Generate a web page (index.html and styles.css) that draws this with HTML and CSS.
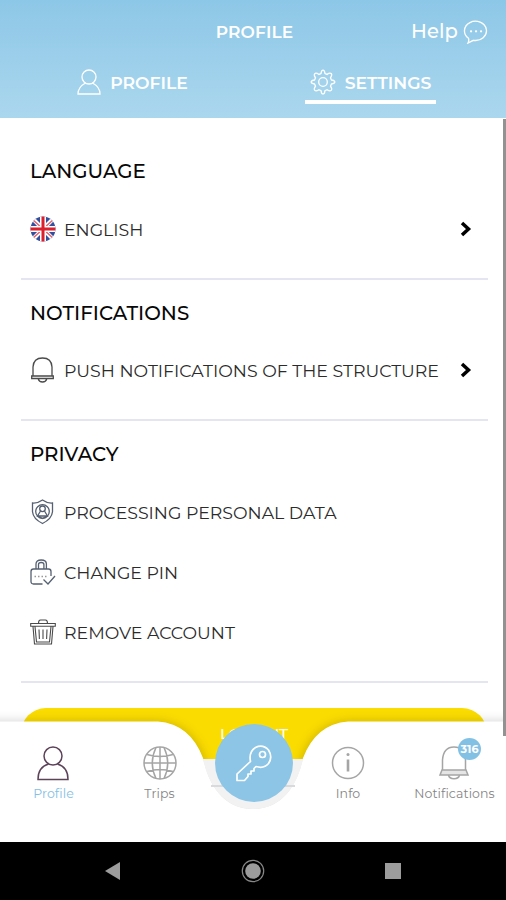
FILE: index.html
```html
<!DOCTYPE html>
<html lang="en">
<head>
<meta charset="utf-8">
<title>Profile settings</title>
<link rel="stylesheet" href="styles.css">
</head>
<body>
<div class="app">
  <header class="header">
    <div class="titlebar">
      <h1 class="title">PROFILE</h1>
      <a class="help"><span class="help-text">Help</span>
        <svg width="26" height="24" viewBox="0 0 26 24"><path d="M5.500 18.300A11 9.600 0 1 1 10.400 20.300L5 23Q6.300 20.500 5.500 18.300Z"/><path class="dots" d="M8 11.300h.1M13 11.300h.1M18 11.300h.1"/></svg>
      </a>
    </div>
    <nav class="tabs">
      <a class="tab"><svg width="24" height="26" viewBox="0 0 24 26"><circle cx="12" cy="8" r="7"/><path d="M8.500 14Q1 18 1 25H23Q23 18 15.500 14"/></svg><span>PROFILE</span></a>
      <a class="tab active"><svg width="26" height="26" viewBox="0 0 26 26"><circle cx="13" cy="13" r="4.300"/><path d="M13 1.200q1.600 0 2 3.300l2.100.9q2.800-2 4.100-.8t-.7 4.200l.9 2.200q3.400.4 3.400 2t-3.400 2l-.9 2.200q2 2.900.7 4.200t-4.100-.7l-2.100.9q-.4 3.300-2 3.300t-2-3.300l-2.100-.9q-2.800 2-4.100.7t.7-4.200l-.9-2.200q-3.400-.4-3.400-2t3.400-2l.9-2.200q-2-2.900-.7-4.200t4.100.8l2.100-.9q.4-3.300 2-3.300z"/></svg><span>SETTINGS</span></a>
    </nav>
  </header>

  <main class="content">
    <section class="section">
      <h2>LANGUAGE</h2>
      <a class="row">
        <svg class="flag" width="26" height="26" viewBox="0 0 26 26"><defs><clipPath id="round"><circle cx="13" cy="13" r="12.500"/></clipPath></defs><g clip-path="url(#round)"><path fill="#314f9d" d="M0 0h26v26H0z"/><path stroke="#fff" stroke-width="4" d="M2 2l22 22M24 2L2 24"/><path stroke="#e5626b" stroke-width="1.500" d="M2 3l22 20M24 3L2 23"/><path stroke="#fff" stroke-width="6" d="M13 0v26M0 13h26"/><path stroke="#dc1f2c" stroke-width="3" d="M13 0v26M0 13h26"/></g></svg>
        <span>ENGLISH</span>
        <svg class="chevron" width="12" height="16" viewBox="0 0 12 16"><path d="M2 2l6.500 6L2 14"/></svg>
      </a>
    </section>
    <section class="section">
      <h2>NOTIFICATIONS</h2>
      <a class="row">
        <svg class="dark" width="26" height="26" viewBox="0 0 26 26"><path d="M3 19V10Q3.500 1 12.500 1T22 10v9M1.700 19h21.600v2.500H1.700zM8.300 22c1 4 7.400 4 8.400 0"/></svg>
        <span>PUSH NOTIFICATIONS OF THE STRUCTURE</span>
        <svg class="chevron" width="12" height="16" viewBox="0 0 12 16"><path d="M2 2l6.500 6L2 14"/></svg>
      </a>
    </section>
    <section class="section">
      <h2>PRIVACY</h2>
      <a class="row">
        <svg class="slate" width="26" height="26" viewBox="0 0 26 26"><path d="M12.500 1Q7.500 4.500 2.500 4v8.800q.7 7.200 10 11.700 9.300-4.500 10-11.700V4q-5 .5-10-3z"/><circle cx="12.500" cy="12.500" r="6.800"/><circle cx="12.500" cy="9.800" r="2.800"/><path d="M10.500 12L7.500 17h10l-3-5M8.500 17.500l4 2 4-2"/></svg>
        <span>PROCESSING PERSONAL DATA</span>
      </a>
      <a class="row">
        <svg class="slate" width="26" height="26" viewBox="0 0 26 26"><path d="M6 10V5q0-4 5.200-4t5.200 4v5M8.500 10V5.500q0-2 2.700-2t2.700 2V10M12.500 25H3.500Q1 25 1 22.500v-10Q1 10 3.500 10h15Q21 10 21 12.500V17M13.500 20.500L18 25l7-8"/><path class="pin" d="M4.500 17.500h13"/></svg>
        <span>CHANGE PIN</span>
      </a>
      <a class="row">
        <svg class="dark trash" width="26" height="26" viewBox="0 0 26 26"><path d="M.7 4.500h24.600v2.800H.7zM8.500 4.500Q8.500 1 10.500 1h5q2 0 2 3.500M3 7.500L4.500 25h17L23 7.500M5 7.500L6.500 23h13L21 7.500M9 10.500l.4 9.500M13 10.500v9.500M17 10.500l-.4 9.500"/></svg>
        <span>REMOVE ACCOUNT</span>
      </a>
    </section>
    <button class="logout">LOGOUT</button>
    <hr class="end">
  </main>

  <nav class="dock">
    <svg class="dock-shape" width="506" height="142" viewBox="0 0 506 142">
      <defs><filter id="shade" x="-10%" y="-30%" width="120%" height="160%"><feGaussianBlur stdDeviation="6"/></filter><clipPath id="visible"><path d="M0 0h506v142H0z"/></clipPath></defs>
      <g clip-path="url(#visible)">
        <path fill="#000" opacity=".2" filter="url(#shade)" d="M-30 22H158Q190 24 203 57C211 91 228 108 253 108S295 91 303 57Q316 24 348 22H536V180H-30Z"/>
        <path fill="#fff" d="M0 21.500H158Q190 24 203 58C210 91 228 109 253 109S296 91 303 58Q316 24 348 21.500H506V142H0Z"/>
        <path fill="#f2f2f2" d="M203 59C210 91 228 109 253 109S296 91 303 59Z"/>
        <path stroke="#d9dadd" stroke-width="2" d="M211 86h84"/>
      </g>
    </svg>
    <div class="dock-items">
      <a class="item profile"><svg width="34" height="36" viewBox="0 0 34 36"><circle cx="16" cy="11" r="9"/><path d="M11.500 19Q1 22 1 34.500H31Q31 22 20.500 19"/></svg><span>Profile</span></a>
      <a class="item trips"><svg width="36" height="36" viewBox="0 0 36 36"><circle cx="18" cy="18" r="16"/><path d="M18 2v32M2 18h32M5 9.500q13 4 26 0M5 26.500q13-4 26 0M14 2.500Q6.500 18 14 33.500M22 2.500Q29.500 18 22 33.500"/></svg><span>Trips</span></a>
      <a class="key"><svg width="40" height="40" viewBox="0 0 40 40"><path d="M16.500 18.500Q14.500 9 21.500 4.500Q29 1 34.500 7Q39 14 34.500 20.500Q30 26 22 23.500L20 25.500v2.500h-3v3h-3v2.500L10.500 37.500H3V31Z"/><circle cx="28.500" cy="11.500" r="3"/></svg></a>
      <a class="item info"><svg width="36" height="36" viewBox="0 0 36 36"><circle cx="18" cy="18" r="15.500"/><path class="stem" d="M18 14.500v12"/><circle class="dot" cx="18" cy="9.500" r="1.500"/></svg><span>Info</span></a>
      <a class="item notes"><svg width="36" height="36" viewBox="0 0 36 36"><path d="M6.500 25V15Q7.500 2 18 2t11.500 13v10M12.500 30c1 5 10 5 11 0"/><path class="base" d="M6 25h24l2 5H4z"/></svg><span>Notifications</span><b class="badge">316</b></a>
    </div>
  </nav>
  <div class="scrollbar"></div>

  <footer class="system">
    <svg width="18" height="20" viewBox="0 0 18 20"><path d="M1 10L16 1v18z"/></svg>
    <svg width="26" height="26" viewBox="0 0 26 26"><circle cx="13" cy="13" r="7.800"/><circle class="ring" cx="13" cy="13" r="10.700"/></svg>
    <svg width="18" height="18" viewBox="0 0 18 18"><path d="M1 1h16v16H1z"/></svg>
  </footer>
</div>
</body>
</html>
```

FILE: styles.css
```css
* { box-sizing: border-box; }
body { margin: 0; font-family: Montserrat, Inter, "Open Sans", sans-serif; color: #2b2b2b; }
svg { flex: none; fill: none; }
.app { position: relative; width: 506px; height: 900px; display: flex; flex-direction: column; overflow: hidden; background: #fff; }

.header { height: 118px; flex: none; background: linear-gradient(#8dc7e7, #abd7ee); color: #fff; }
.titlebar { display: grid; grid-template-columns: 1fr auto 1fr; height: 64px; align-items: center; padding: 0 17px 0 20px; }
.title { grid-column: 2; margin: 0; font-size: 17px; font-weight: 600; letter-spacing: .1px; }
.help { justify-self: end; display: flex; align-items: center; gap: 5px; font-size: 19.500px; font-weight: 500; letter-spacing: .1px; }
.help-text { position: relative; top: -1px; }
.help svg, .tab svg { stroke: #fff; stroke-width: 1.300; }
.help .dots { stroke-width: 2.200; stroke-linecap: round; }
.tabs { display: flex; height: 40px; padding-left: 1px; }
.tab { width: 131px; margin-left: 66px; height: 40px; display: flex; align-items: center; justify-content: center; gap: 9px; font-size: 17.200px; font-weight: 600; border-bottom: 4px solid transparent; }
.tab + .tab { margin-left: 107px; }
.tab.active { border-color: #fff; }

.content { position: relative; flex: 1; padding: 20px 18px 0 21px; overflow: hidden; }
.section { padding: 18px 9px 18.500px; border-bottom: 2px solid #e4e5f0; }
.section h2 { margin: 0 0 13px; height: 30px; line-height: 30px; font-size: 19.800px; font-weight: 500; color: #080808; }
.row { display: flex; height: 60px; align-items: center; font-size: 17.350px; white-space: nowrap; }
.row svg { position: relative; top: -.5px; }
.row span { margin-left: 8px; }
.chevron { margin: 0 7px 0 auto; stroke: #000; stroke-width: 3.500; }
.dark { stroke: #4b4b4b; stroke-width: 1.300; }
.trash { stroke-width: 1.100; }
.slate { stroke: #556071; stroke-width: 1.300; }
.pin { stroke: #999; stroke-dasharray: 1.500 2; }
.logout { display: block; width: 466px; height: 51px; margin-top: 25px; padding: 0; border: 0; border-radius: 25px; background: #fbdc00; color: #fff; font: 500 15.500px/47px Montserrat, Inter, sans-serif; }
.end { margin: 25px 0 0; border: 0; border-top: 2px solid #dcdde2; }
.scrollbar { position: absolute; right: 0; top: 119px; width: 3px; height: 617px; background: #929292; }

.dock { position: absolute; left: 0; top: 700px; width: 506px; height: 142px; }
.dock-shape { position: absolute; inset: 0; }
.dock-items { position: relative; display: grid; grid-template-columns: 107px 105px 83px 106px 105px; height: 142px; }
.item { position: relative; display: flex; flex-direction: column; align-items: center; padding-top: 45px; font-size: 12.500px; line-height: 18px; color: #858585; white-space: nowrap; }
.item svg { stroke: #a5a5a5; stroke-width: 1.500; height: 36px; }
.item span { margin-top: 4px; letter-spacing: .1px; }
.profile { color: #83c0e5; }
.profile svg { stroke: #5d4359; }
.info .stem { stroke-width: 2.600; }
.info .dot { fill: #a5a5a5; stroke: none; }
.notes span { margin-left: 2px; }
.base { fill: #e5e5e5; }
.key { width: 78px; height: 78px; margin: 24px 0 0 3px; border-radius: 50%; background: #8cc5e6; display: grid; place-items: center; }
.key svg { stroke: #fff; stroke-width: 1.700; stroke-linejoin: round; }
.badge { position: absolute; left: 57px; top: 38px; width: 23px; height: 22px; border-radius: 50%; background: #83c1e4; color: #fff; font-size: 11px; line-height: 22px; text-align: center; }

.system { height: 58px; flex: none; display: flex; justify-content: space-between; align-items: center; padding: 0 104px; background: #000; }
.system svg { fill: #9c9c9c; }
.system .ring { fill: none; stroke: #888; stroke-width: 1.200; }
```
